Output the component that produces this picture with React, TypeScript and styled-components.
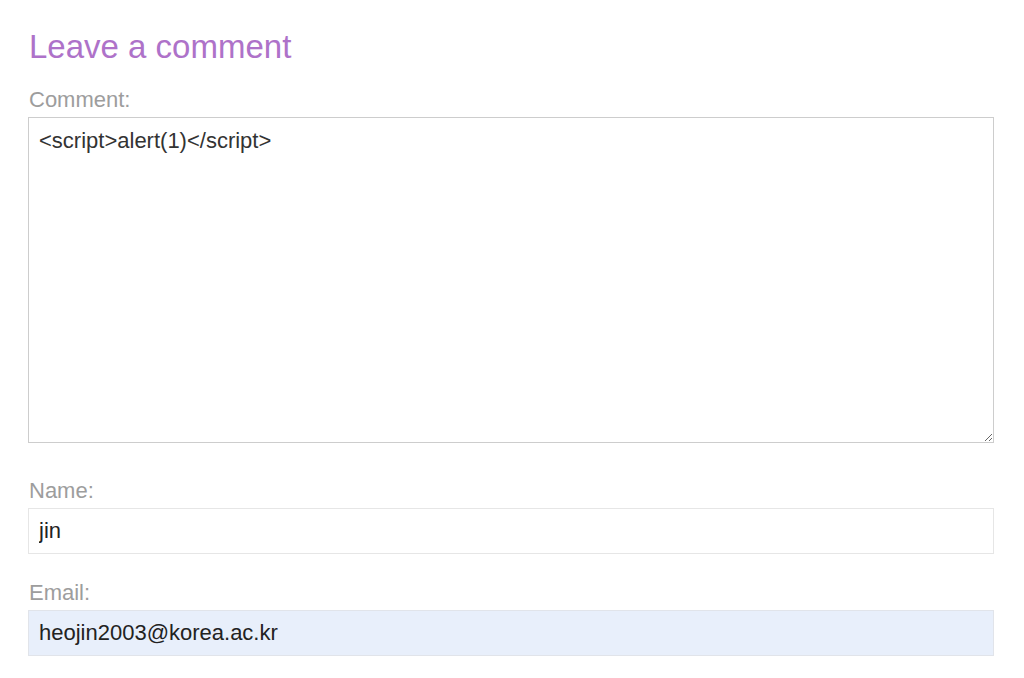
import styled, { createGlobalStyle } from "styled-components";

const GlobalStyle = createGlobalStyle`
  body {
    margin: 0;
    background: #fff;
    font-family: "Liberation Sans", Arial, sans-serif;
  }
`;

const Page = styled.div`
  padding: 28px 30px 0 28px;
`;

const Title = styled.h2`
  margin: 0 0 21px 1px;
  font-size: 33px;
  font-weight: 400;
  color: #ae72c9;
`;

const Field = styled.div<{ $gap: number }>`
  display: flex;
  flex-direction: column;
  margin-bottom: ${(p) => p.$gap}px;
`;

const Label = styled.label`
  font-size: 22px;
  color: #9d9d9d;
  margin: 0 0 4px 1px;
`;

const Area = styled.textarea`
  box-sizing: border-box;
  width: 966px;
  height: 326px;
  margin: 0;
  padding: 10px 10px;
  border: 1px solid #cdcdcd;
  font-family: "Liberation Sans", Arial, sans-serif;
  font-size: 22px;
  color: #333;
  background: #fff;
  resize: both;
  outline: none;
`;

const Input = styled.input<{ $filled?: boolean }>`
  box-sizing: border-box;
  width: 966px;
  height: 46px;
  margin: 0;
  padding: 0 10px;
  border: 1px solid ${(p) => (p.$filled ? "#e1e4ea" : "#e6e6e6")};
  background: ${(p) => (p.$filled ? "#e8effb" : "#fff")};
  font-family: "Liberation Sans", Arial, sans-serif;
  font-size: 22px;
  color: #222;
  outline: none;
`;

export default function App() {
  return (
    <>
      <GlobalStyle />
      <Page>
        <Title>Leave a comment</Title>
        <Field $gap={35}>
          <Label>Comment:</Label>
          <Area defaultValue="<script>alert(1)</script>" />
        </Field>
        <Field $gap={26}>
          <Label>Name:</Label>
          <Input defaultValue="jin" />
        </Field>
        <Field $gap={0}>
          <Label>Email:</Label>
          <Input $filled defaultValue="heojin2003@korea.ac.kr" />
        </Field>
      </Page>
    </>
  );
}
